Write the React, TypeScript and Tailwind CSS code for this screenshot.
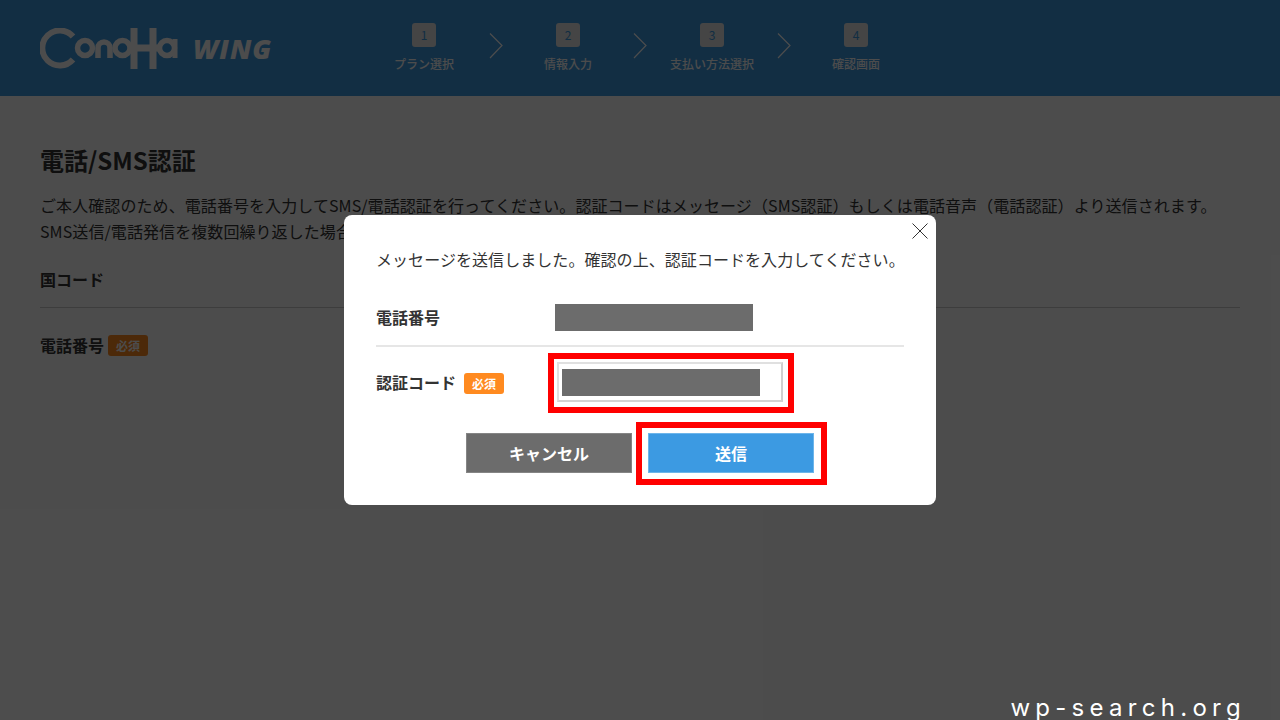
import React from 'react';

const jp = "font-['Noto_Sans_CJK_JP','Noto_Sans',sans-serif]";

const steps = [
  { no: 1, label: 'プラン選択' },
  { no: 2, label: '情報入力' },
  { no: 3, label: '支払い方法選択' },
  { no: 4, label: '確認画面' },
];

const Logo: React.FC = () => (
  <svg width="138" height="41" viewBox="0 0 138 41" fill="none" stroke="#ffffff" strokeWidth="6">
    <path d="M33 8.5 A17.5 17.5 0 1 0 33 31.5" />
    <circle cx="45" cy="20" r="7.5" strokeWidth="5.5" />
    <path d="M58 30 V20 A6 6 0 0 1 70 20 V30" strokeWidth="5.5" />
    <circle cx="82.5" cy="20" r="7.5" strokeWidth="5.5" />
    <path d="M94 0 V41 M113 0 V41 M90 20 H122" strokeWidth="7" />
    <circle cx="127" cy="20" r="7.5" strokeWidth="5.5" />
    <path d="M135 11 V30" strokeWidth="5" />
  </svg>
);

const Badge: React.FC = () => (
  <span className="mt-px inline-flex h-[21px] w-10 items-center justify-center rounded-[3px] bg-[#ff8a20] text-xs font-bold text-white">
    必須
  </span>
);

export default function App() {
  return (
    <div className={`relative h-[720px] w-full overflow-hidden bg-white text-[#333333] ${jp}`}>
      <header className="flex h-24 items-center bg-[#3c9ae2] pl-10">
        <div className="flex w-[340px] items-center gap-[15px]">
          <Logo />
          <span className="font-['Open_Sans',sans-serif] text-[27px] font-extrabold italic leading-none tracking-[0.04em] text-white">
            WING
          </span>
        </div>
        <div className="flex">
          {steps.map((s, i) => (
            <div key={s.no} className="flex">
              <div className="flex w-[88px] flex-col items-center">
                <span className="flex h-6 w-6 items-center justify-center rounded-[3px] bg-[#e6e6e6] text-xs text-[#3c9ae2]">
                  {s.no}
                </span>
                <span className="mt-2 whitespace-nowrap text-xs font-medium leading-[18px] text-white">{s.label}</span>
              </div>
              {i < 3 && (
                <div className="flex w-14 justify-center pt-2.5">
                  <svg width="14" height="26" viewBox="0 0 14 26" fill="none" stroke="#ffffff" strokeWidth="1.2">
                    <path d="M1 0.5 L13 12.5 L1 25" />
                  </svg>
                </div>
              )}
            </div>
          ))}
        </div>
      </header>

      <main className="px-10 pt-[46px]">
        <h1 className="text-2xl font-bold leading-9">電話/SMS認証</h1>
        <p className="mt-[14px] text-base leading-[26px] tracking-[0.08px]">
          ご本人確認のため、電話番号を入力してSMS/電話認証を行ってください。認証コードはメッセージ（SMS認証）もしくは電話音声（電話認証）より送信されます。
          <br />
          SMS送信/電話発信を複数回繰り返した場合、
        </p>
        <div className="mt-[23px] border-b border-[#cccccc] pb-4 text-base font-bold leading-6">国コード</div>
        <div className="mt-[25px] flex items-center gap-1 text-base font-bold leading-6">
          電話番号
          <Badge />
        </div>
      </main>

      {/* overlay + modal */}
      <div className="absolute inset-0 flex items-center justify-center bg-black/70">
        <div className="relative h-[290px] w-[592px] rounded-lg bg-white px-8 pt-8">
          <button className="absolute right-2 top-2 text-[#333333]">
            <svg width="16" height="16" viewBox="0 0 16 16" fill="none" stroke="currentColor" strokeWidth="1">
              <path d="M0.5 0.5 L15.5 15.5 M15.5 0.5 L0.5 15.5" />
            </svg>
          </button>
          <p className="whitespace-nowrap text-base leading-6 tracking-[0.06px]">
            メッセージを送信しました。確認の上、認証コードを入力してください。
          </p>
          <div className="mt-5 flex h-14 items-start border-b-2 border-[#e6e6e6] pt-[13px]">
            <span className="mt-px w-[179px] text-base font-bold leading-6">電話番号</span>
            <span className="h-[27px] w-[198px] bg-[#6c6c6c]" />
          </div>
          <div className="mt-1.5 flex items-center">
            <span className="w-[88px] pb-0.5 text-base font-bold leading-6">認証コード</span>
            <Badge />
            <div className="ml-11 border-[6px] border-[#ff0000] pb-[5px] pl-[3px] pr-[5px] pt-[3px]">
              <div className="flex h-10 w-[226px] items-center border-2 border-[#e0e0e0] border-b-[#d4d4d4] border-r-[#cfcfcf] pl-[3px]">
                <span className="h-[27px] w-[198px] bg-[#6c6c6c]" />
              </div>
            </div>
          </div>
          <div className="mt-[9px] flex items-start pl-[90px]">
            <button className="mt-[11px] h-10 w-[166px] border border-[#858585] bg-[#6c6c6c] text-base font-bold text-white">
              キャンセル
            </button>
            <div className="ml-1 border-[6px] border-[#ff0000] pb-1.5 pl-1.5 pr-[7px] pt-[5px]">
              <button className="block h-10 w-[166px] border border-[#6db5ea] bg-[#3c9ae2] text-base font-bold text-white">
                送信
              </button>
            </div>
          </div>
        </div>
      </div>

      <span className="absolute bottom-0 right-[34px] font-['Inter',sans-serif] text-2xl font-normal leading-6 tracking-[0.22em] text-white">
        wp-search.org
      </span>
    </div>
  );
}
